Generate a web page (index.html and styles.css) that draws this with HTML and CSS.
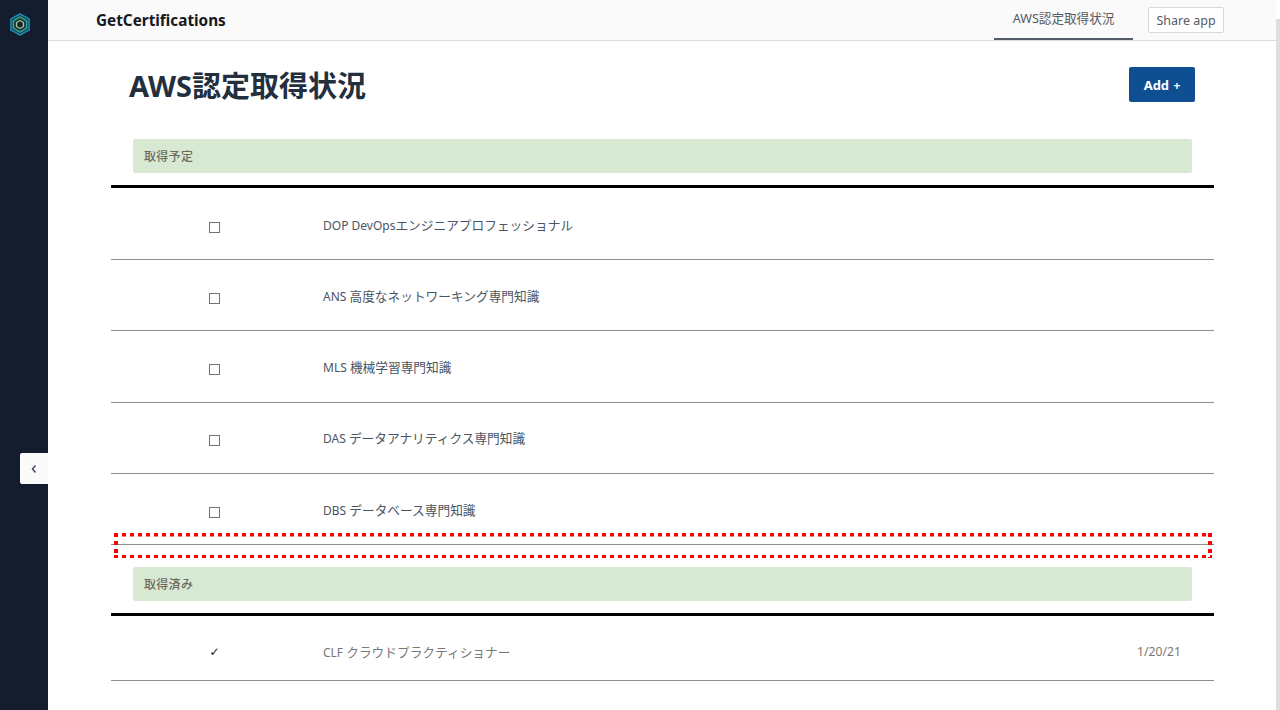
FILE: index.html
```html
<!DOCTYPE html>
<html lang="ja">
<head>
<meta charset="utf-8">
<title>GetCertifications</title>
<link rel="stylesheet" href="styles.css">
</head>
<body>
<div class="app">
  <aside class="sidebar">
    <svg class="logo" width="20" height="23" viewBox="0 0 20 23" fill="none">
      <path d="M10 1 L19 6 V17 L10 22 L1 17 V6 Z" stroke="#1f86ad" stroke-width="1.7" fill="#14304a"/>
      <path d="M10 3.8 L16.6 7.6 V15.4 L10 19.2 L3.4 15.4 V7.6 Z" stroke="#33a68d" stroke-width="1.5" fill="#1d3f3f"/>
      <path d="M10 7.6 L13.4 9.5 V13.5 L10 15.4 L6.6 13.5 V9.5 Z" stroke="#a9c39a" stroke-width="1.2" fill="#18262f"/>
    </svg>
    <button class="collapse" type="button">
      <svg width="8" height="10" viewBox="0 0 8 10" fill="none"><path d="M5.5 1.5 L2.5 5 L5.5 8.5" stroke="#414d5c" stroke-width="1.5"/></svg>
    </button>
  </aside>
  <div class="main">
    <header class="topbar">
      <div class="brand">GetCertifications</div>
      <nav class="nav">
        <a class="tab">AWS認定取得状況</a>
        <button class="share" type="button">Share app</button>
      </nav>
    </header>
    <main class="content">
      <div class="title-row">
        <h1 class="title">AWS認定取得状況</h1>
        <button class="add" type="button">Add <span class="plus">+</span></button>
      </div>
      <div class="group-head">取得予定</div>
      <div class="rows">
        <div class="row"><span class="cell-check"><span class="box"></span></span><span class="name"><span class="code">DOP DevOps</span>エンジニアプロフェッショナル</span></div>
        <div class="row"><span class="cell-check"><span class="box"></span></span><span class="name"><span class="code">ANS </span>高度なネットワーキング専門知識</span></div>
        <div class="row"><span class="cell-check"><span class="box"></span></span><span class="name"><span class="code">MLS </span>機械学習専門知識</span></div>
        <div class="row"><span class="cell-check"><span class="box"></span></span><span class="name"><span class="code">DAS </span>データアナリティクス専門知識</span></div>
        <div class="row"><span class="cell-check"><span class="box"></span></span><span class="name"><span class="code">DBS </span>データベース専門知識</span></div>
      </div>
      <div class="group-head second">取得済み</div>
      <div class="rows">
        <div class="row done"><span class="cell-check"><span class="tick">✓</span></span><span class="name"><span class="code">CLF </span>クラウドプラクティショナー</span><span class="date">1/20/21</span></div>
      </div>
    </main>
    <div class="highlight"></div>
  </div>
  <div class="scrollbar"></div>
</div>
</body>
</html>
```

FILE: styles.css
```css
* { box-sizing: border-box; }
html, body { margin: 0; height: 710px; overflow: hidden; background: #fff; }
body { font-family: "Noto Sans", "Noto Sans CJK JP", sans-serif; color: #16191f; }
.app { display: flex; height: 710px; }
.sidebar { width: 48px; flex: none; background: #141d2e; position: relative; }
.logo { position: absolute; left: 10px; top: 13px; }
.collapse { position: absolute; left: 20px; top: 453px; width: 28px; height: 31px; padding: 0; border: 0; border-radius: 2px 0 0 2px; background: #fafafa; display: flex; align-items: center; justify-content: center; }
.main { flex: 1; min-width: 0; position: relative; }
.scrollbar { width: 4px; flex: none; background: #dedede; margin-top: 19px; }
.topbar { height: 41px; background: #fafafa; border-bottom: 1px solid #d9dde3; display: flex; justify-content: space-between; padding: 0 52px 0 48px; }
.brand { font-size: 15.3px; font-weight: 700; line-height: 40px; color: #16191f; }
.nav { display: flex; align-items: flex-start; gap: 15px; }
.tab { width: 139px; height: 40px; line-height: 38px; text-align: center; font-size: 12.6px; color: #545b64; border-bottom: 2px solid #545b64; }
.share { width: 76px; height: 26px; margin-top: 7px; padding: 0; border: 1px solid #d5dbdb; border-radius: 2px; background: #fff; font: 12.5px "Noto Sans", sans-serif; color: #545b64; }
.content { padding: 0 62px 0 63px; }
.title-row { display: flex; justify-content: space-between; align-items: flex-start; padding: 26px 19px 0 18px; height: 98px; }
.title { margin: 0; font-size: 29px; line-height: 37px; font-weight: 700; color: #232f3e; }
.add { width: 66px; height: 35px; border: 0; border-radius: 2px; background: #0e4f91; color: #fff; font: 700 13px "Noto Sans", sans-serif; padding: 0; }
.plus { font-size: 12px; margin-left: 1px; }
.group-head { margin: 0 22px; height: 34px; line-height: 36px; padding-left: 11px; background: #d8e9d3; border-radius: 2px; font-size: 12px; font-weight: 500; color: #6b6b60; letter-spacing: 0.3px; }
.group-head.second { margin-top: 22px; }
.rows { margin-top: 12px; border-top: 3px solid #000; }
.row { height: 71.3px; border-bottom: 1px solid #8f8f8f; display: flex; align-items: center; font-size: 12.7px; color: #4a5563; }
.row:first-child { height: 72px; padding-top: 2px; }
.cell-check { width: 212px; display: flex; justify-content: center; padding: 6px 5px 0 0; }
.box { width: 11px; height: 11px; border: 1.5px solid #6a7480; background: #fff; }
.tick { font: 12px "DejaVu Sans", sans-serif; color: #111; }
.name { flex: 1; }
.code { font-size: 12px; }
.date { padding-right: 33px; color: #777; font-size: 12.2px; }
.row.done { height: 65px; padding-top: 6px; }
.done .cell-check { padding-top: 2px; }
.done .name { color: #777; }
.highlight {
  position: absolute; left: 66px; top: 533px; width: 1098px; height: 25px; pointer-events: none;
  background:
    repeating-linear-gradient(90deg, #f00 0 4px, transparent 4px 8px) top / 100% 3.5px no-repeat,
    repeating-linear-gradient(90deg, #f00 0 4px, transparent 4px 8px) bottom / 100% 3.5px no-repeat,
    repeating-linear-gradient(180deg, #f00 0 4px, transparent 4px 8px) left / 4px 100% no-repeat,
    repeating-linear-gradient(180deg, #f00 0 4px, transparent 4px 8px) right / 4px 100% no-repeat;
}
```
